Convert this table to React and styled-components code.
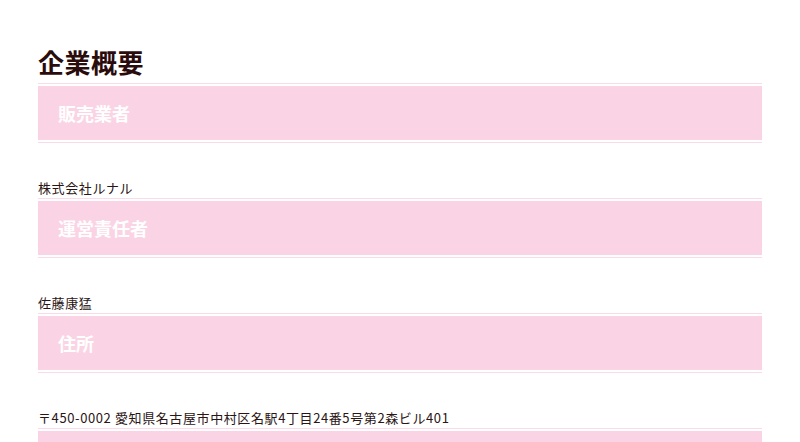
import React from 'react';
import styled, { createGlobalStyle } from 'styled-components';

const GlobalStyle = createGlobalStyle`
  html, body {
    margin: 0;
    padding: 0;
    background: #fff;
  }
  body {
    font-family: "Noto Sans CJK JP", "Noto Sans", sans-serif;
    color: #2a1212;
  }
`;

const items = [
  { term: '販売業者', desc: '株式会社ルナル' },
  { term: '運営責任者', desc: '佐藤康猛' },
  { term: '住所', desc: '〒450-0002 愛知県名古屋市中村区名駅4丁目24番5号第2森ビル401' },
  { term: '電話番号', desc: '' },
];

function App() {
  return (
    <>
      <GlobalStyle />
      <Section>
        <Heading>企業概要</Heading>
        <List>
          {items.map((item) => (
            <React.Fragment key={item.term}>
              <Term>
                <TermLabel>{item.term}</TermLabel>
              </Term>
              <Desc>{item.desc}</Desc>
            </React.Fragment>
          ))}
        </List>
      </Section>
    </>
  );
}

const Section = styled.section`
  padding: 44px 38px 0;
  height: 442px;
  box-sizing: border-box;
  overflow: hidden;
`;

const Heading = styled.h2`
  margin: 0 0 3px;
  font-size: 26px;
  line-height: 36px;
  font-weight: 700;
  color: #2a0c0c;
  letter-spacing: 0.5px;
`;

const List = styled.dl`
  margin: 0;
`;

const Term = styled.dt`
  padding: 2px 0;
  border-top: 1px solid #fadbe8;
  border-bottom: 1px solid #fadbe8;
`;

const TermLabel = styled.div`
  height: 54px;
  padding: 0 20px;
  display: flex;
  align-items: center;
  background: #fad4e4;
  color: #fff;
  font-size: 18px;
  font-weight: 700;
`;

const Desc = styled.dd`
  margin: 0 0 1px;
  padding-top: 36px;
  font-size: 13px;
  line-height: 18px;
  min-height: 18px;
  letter-spacing: 0.6px;
  color: #2a1414;
`;

export default App;
